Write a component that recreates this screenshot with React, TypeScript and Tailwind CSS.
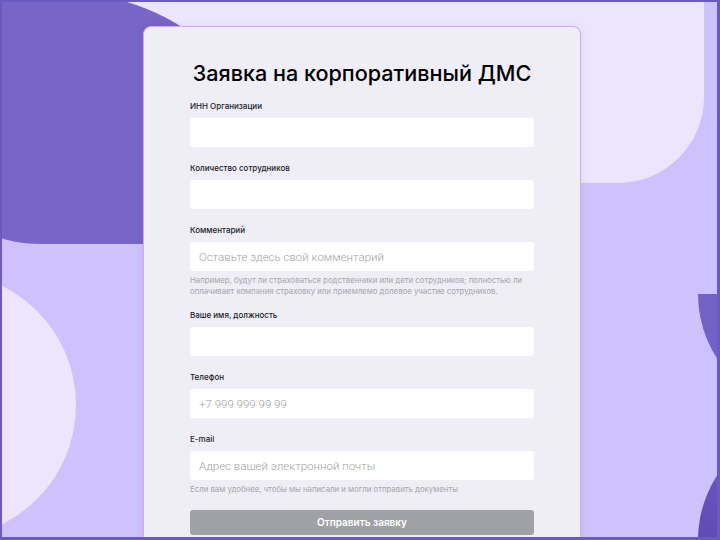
import React from "react";

type Field = {
  label: string;
  placeholder?: string;
  hint?: string;
};

const fields: Field[] = [
  { label: "ИНН Организации" },
  { label: "Количество сотрудников" },
  {
    label: "Комментарий",
    placeholder: "Оставьте здесь свой комментарий",
    hint: "Например, будут ли страховаться родственники или дети сотрудников; полностью ли оплачивает компания страховку или приемлемо долевое участие сотрудников.",
  },
  { label: "Ваше имя, должность" },
  { label: "Телефон", placeholder: "+7 999 999 99 99" },
  {
    label: "E-mail",
    placeholder: "Адрес вашей электронной почты",
    hint: "Если вам удобнее, чтобы мы написали и могли отправить документы",
  },
];

function Backdrop() {
  return (
    <svg
      className="absolute -left-[2px] -top-[2px] h-[540px] w-[720px]"
      viewBox="0 0 720 540"
      aria-hidden="true"
    >
      <defs>
        <linearGradient id="deep" x1="0" y1="0" x2="0" y2="1">
          <stop offset="0" stopColor="#6e5cc2" />
          <stop offset="1" stopColor="#5f4bb4" />
        </linearGradient>
      </defs>
      <rect width="720" height="540" fill="#cdc2fd" />
      <path d="M0 0H704V97A86 86 0 0 1 618 183H0Z" fill="#ebe6fe" />
      <path d="M0 0H120Q165 12 200 40L200 244H42C22 244 10 241 0 238Z" fill="#7765c7" />
      <circle cx="-57" cy="405" r="133" fill="#ebe6fe" />
      <path d="M698 294A119 119 0 0 0 936 294Z" fill="#7361c5" />
      <path d="M698 540A119 119 0 0 1 936 540Z" fill="url(#deep)" />
    </svg>
  );
}

function FormField({ field, first, afterHint }: { field: Field; first: boolean; afterHint: boolean }) {
  return (
    <div className={first ? "" : afterHint ? "mt-[12px]" : "mt-[15px]"}>
      <label className="block text-[8px] font-medium leading-[12px] text-[#1d1b2c]">{field.label}</label>
      <input
        type="text"
        placeholder={field.placeholder}
        className="mt-[6px] block h-[29px] w-full rounded-[3px] bg-white px-[9px] font-['Roboto',sans-serif] text-[11.5px] font-light text-[#333] outline-none placeholder:text-[#9f9f9f]"
      />
      {field.hint ? (
        <p className="mt-[4px] text-[7.8px] leading-[11px] text-[#a6a5ad]">{field.hint}</p>
      ) : null}
    </div>
  );
}

export default function App() {
  return (
    <div
      className="relative h-[540px] w-[720px] overflow-hidden border-t-2 border-l-2 border-r-[3px] border-b-[3px] border-[#6b5bc0]"
      style={{ fontFamily: "Inter, 'Noto Sans', sans-serif" }}
    >
      <Backdrop />
      <div className="relative ml-[141px] mt-[24px] h-[560px] w-[438px] rounded-[8px] border border-[#d6a8e4] bg-[#efedf6] px-[46px] pt-[32px] shadow-[0_2px_8px_rgba(80,60,160,0.12)]">
        <h1 className="-mx-[30px] whitespace-nowrap text-center text-[21.6px] font-medium leading-[28px] text-black">
          Заявка на корпоративный ДМС
        </h1>
        <form className="mt-[13px]" onSubmit={(e) => e.preventDefault()}>
          {fields.map((field, i) => (
            <FormField key={field.label} field={field} first={i === 0} afterHint={i > 0 && !!fields[i - 1].hint} />
          ))}
          <button
            type="submit"
            className="mt-[15px] block h-[25px] w-full rounded-[3px] bg-[#a0a1a6] text-[10px] font-semibold text-white"
          >
            Отправить заявку
          </button>
        </form>
      </div>
    </div>
  );
}
